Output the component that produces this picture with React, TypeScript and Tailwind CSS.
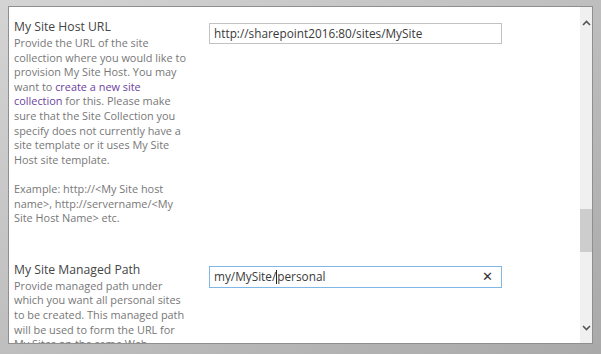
import React from 'react'

const font = { fontFamily: '"Open Sans", "Noto Sans", Arial, sans-serif' }

function Chevron({ dir }: { dir: 'up' | 'down' }) {
  return (
    <svg width="9" height="6" viewBox="0 0 9 6" className="block">
      <path
        d={dir === 'up' ? 'M1 5 L4.5 1.5 L8 5' : 'M1 1 L4.5 4.5 L8 1'}
        fill="none"
        stroke="#555"
        strokeWidth="1.6"
      />
    </svg>
  )
}

function Section({
  title,
  children,
  input,
}: {
  title: string
  children: React.ReactNode
  input: React.ReactNode
}) {
  return (
    <div className="flex">
      <div className="w-[195px] shrink-0 whitespace-nowrap">
        <div className="text-[12.2px] leading-[18px] text-[#444]">{title}</div>
        <div className="text-[10.9px] leading-[14.6px] text-[#777]">{children}</div>
      </div>
      <div className="pt-[5px]">{input}</div>
    </div>
  )
}

export default function App() {
  return (
    <div
      className="w-[601px] h-[354px] bg-gradient-to-br from-[#d4d4d4] to-[#a9a9a9] pt-[6px] pl-[8px] pr-[8px] pb-[10px]"
      style={font}
    >
      <div className="h-full border border-[#8f8f8f] bg-white flex overflow-hidden">
        <div className="flex-1 pl-[5px] pt-[11px] flex flex-col gap-[35px] overflow-hidden">
          <Section
            title="My Site Host URL"
            input={
              <div className="w-[293px] h-[21px] border border-[#c2c2c2] flex items-center px-[4px] text-[11.8px] text-[#3a3a3a]">
                http://sharepoint2016:80/sites/MySite
              </div>
            }
          >
            Provide the URL of the site
            <br />
            collection where you would like to
            <br />
            provision My Site Host. You may
            <br />
            want to <span className="text-[#6b3fa0]">create a new site</span>
            <br />
            <span className="text-[#6b3fa0]">collection</span> for this. Please make
            <br />
            sure that the Site Collection you
            <br />
            specify does not currently have a
            <br />
            site template or it uses My Site
            <br />
            Host site template.
            <br />
            <br />
            Example: http://&lt;My Site host
            <br />
            name&gt;, http://servername/&lt;My
            <br />
            Site Host Name&gt; etc.
          </Section>
          <Section
            title="My Site Managed Path"
            input={
              <div className="w-[293px] h-[22px] border border-[#7fb8e6] flex items-center px-[4px] text-[11.8px] text-[#3a3a3a]">
                <span>my/MySite/</span>
                <span className="w-px h-[14px] bg-[#222]" />
                <span>personal</span>
                <span className="ml-auto mr-[4px] text-[#333] text-[13px] leading-none">✕</span>
              </div>
            }
          >
            Provide managed path under
            <br />
            which you want all personal sites
            <br />
            to be created. This managed path
            <br />
            will be used to form the URL for
            <br />
            My Sites on the same Web
          </Section>
        </div>
        <div className="w-[12px] bg-[#f0f0f0] flex flex-col items-center pt-[13px] pb-[12px]">
          <Chevron dir="up" />
          <div className="flex-1 w-full">
            <div className="mt-[183px] h-[43px] bg-[#cdcdcd]" />
          </div>
          <Chevron dir="down" />
        </div>
      </div>
    </div>
  )
}
